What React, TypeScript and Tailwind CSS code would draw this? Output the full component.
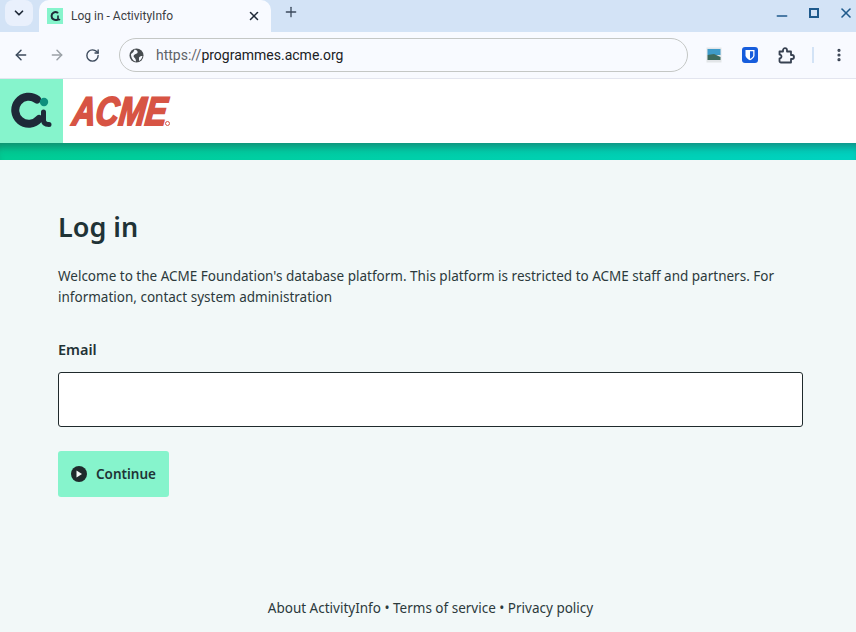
import { ArrowLeft, ArrowRight, RotateCw, X, Plus, ChevronDown, Minus, MoreVertical } from 'lucide-react';

function BrowserChrome() {
  return (
    <div className="flex flex-col font-['Roboto',sans-serif]">
      {/* Tab strip */}
      <div className="h-[32px] bg-[#d3e3f6] flex items-start">
        <div className="w-[28px] h-[26px] ml-[5px] bg-[#e9f0fc] rounded-[8px] flex items-center justify-center text-[#1f2937]">
          <ChevronDown size={14} strokeWidth={3} />
        </div>
        <div className="w-[232px] h-[32px] ml-[6px] bg-[#f8faff] rounded-t-[10px] flex items-center pl-[8px] pr-[10px]">
          <div className="w-[16px] h-[16px] bg-[#86f4cc] flex items-center justify-center">
            <svg width="12" height="12" viewBox="0 0 12 12" fill="none">
              <path d="M8.5 2.5A4 4 0 1 0 8.5 9.5" stroke="#1f2a37" strokeWidth="2" strokeLinecap="round" />
              <path d="M9 6v3.6h1.5" stroke="#1f2a37" strokeWidth="1.6" strokeLinecap="round" />
            </svg>
          </div>
          <span className="ml-[8px] text-[12px] text-[#3c4043] flex-1">Log in - ActivityInfo</span>
          <X size={14} strokeWidth={2.6} className="text-[#1f2937]" />
        </div>
        <Plus size={16} strokeWidth={2} className="ml-[12px] mt-[4px] text-[#3c4a5c]" />
        <div className="ml-auto flex items-center h-[26px] gap-[19px] pr-[2px] text-[#1f5a8c]">
          <Minus size={16} strokeWidth={2.4} className="mt-[6px]" />
          <div className="w-[10px] h-[10px] border-2 border-[#1f5a8c]" />
          <X size={16} strokeWidth={2.4} />
        </div>
      </div>
      {/* Toolbar */}
      <div className="h-[47px] bg-[#f8faff] flex items-center border-b border-[#e3e5ef] pl-[13px]">
        <ArrowLeft size={16} strokeWidth={2.2} className="text-[#3c4a5c]" />
        <ArrowRight size={16} strokeWidth={2.2} className="ml-[20px] text-[#9aa0a6]" />
        <RotateCw size={15} strokeWidth={2.2} className="ml-[20px] text-[#3c4a5c]" />
        <div className="ml-[19px] w-[569px] h-[34px] rounded-full border border-[#c4c7c5] flex items-center pl-[9px] text-[14px]">
          <svg width="15" height="15" viewBox="0 0 15 15" fill="none">
            <circle cx="7.5" cy="7.5" r="7" fill="#474c50" />
            <path d="M2 6 C4 5 5 3 5.5 1.5 C8 2 9 3 8.5 5 C7 6.5 5 6 4.5 8 C5 10 7 10 7 13.5 C4 13 2 10 2 6Z" fill="#f8faff" />
            <path d="M10 9.5 C11 8 12 8 13.5 8 C13 10.5 11.5 12.5 10 13 Z" fill="#f8faff" />
          </svg>
          <span className="ml-[12px] text-[#5f6368]">https://</span>
          <span className="text-[#202124]">programmes.acme.org</span>
        </div>
        <svg width="16" height="16" viewBox="0 0 16 16" className="ml-[18px]">
          <rect width="15" height="15" x="0.5" y="0.5" fill="#e2e5e8" />
          <rect width="13" height="6" x="1.5" y="2" fill="#3f9bc9" />
          <path d="M1.5 8 L8 7 L14.5 10 V13 H1.5 Z" fill="#3d6a5d" />
        </svg>
        <svg width="16" height="16" viewBox="0 0 16 16" className="ml-[20px]">
          <rect width="16" height="16" rx="3" fill="#175ddc" />
          <path d="M3.5 3h9v5.5c0 2.2-2.5 3.8-4.5 4.7-2-.9-4.5-2.5-4.5-4.7z" fill="#fff" />
          <path d="M8 4.3h3.2v4.2c0 1.4-1.6 2.5-3.2 3.3z" fill="#175ddc" />
        </svg>
        <svg width="17" height="17" viewBox="0 0 17 17" fill="none" className="ml-[20px]">
          <path d="M1.5 4.5H5V3.2a2 2 0 0 1 4 0V4.5h4V8h1a2 2 0 0 1 0 4h-1v3.5H3a1.5 1.5 0 0 1-1.5-1.5V11.5a2 2 0 0 0 0-4z" stroke="#374151" strokeWidth="1.8" strokeLinejoin="round" />
        </svg>
        <div className="ml-[17px] w-[2px] h-[16px] bg-[#d3e3f6]" />
        <MoreVertical size={16} strokeWidth={2.8} className="ml-[17px] text-[#374151]" />
      </div>
    </div>
  );
}

function SiteHeader() {
  return (
    <div>
      <div className="h-[64px] bg-white flex items-stretch">
        <div className="w-[63px] bg-[#86f4cc] flex items-center justify-center">
          <svg width="42" height="38" viewBox="0 0 42 38" fill="none">
            <path d="M26 7.5 A13.5 13.5 0 1 0 28 27" stroke="#1e2938" strokeWidth="8" strokeLinecap="round" />
            <path d="M32.5 20 V28 Q32.5 32.5 38 32.5" stroke="#1e2938" strokeWidth="5" strokeLinecap="round" />
            <circle cx="33" cy="10" r="4.2" fill="#0f8f7e" />
          </svg>
        </div>
        <div className="ml-[10px] flex items-start pt-[9px]">
          <span className="w-[92px] whitespace-nowrap text-[40px] leading-[46px] font-['Liberation_Sans',sans-serif] font-bold italic text-[#d75444] [-webkit-text-stroke:2px_#d75444] [transform:scaleX(0.8)_skewX(-8deg)] origin-left">ACME</span>
          <span className="mt-[33px] border border-[#d75444] rounded-full w-[5px] h-[5px]" />
        </div>
      </div>
      <div className="h-[17px] bg-gradient-to-r from-[#00cc94] to-[#00d2c0] shadow-[inset_0_9px_8px_-5px_rgba(40,60,60,0.45)]" />
    </div>
  );
}

export default function App() {
  return (
    <div className="h-[632px] w-[856px] overflow-hidden flex flex-col bg-[#f2f8f8] font-['Noto_Sans',sans-serif] text-[#2c3a3c]">
      <BrowserChrome />
      <SiteHeader />
      <div className="flex-1 flex flex-col px-[58px]">
        <h1 className="mt-[48px] text-[27px] leading-[38px] font-semibold text-[#1f3336]">Log in</h1>
        <p className="mt-[20px] text-[13.5px] leading-[21px] w-[740px]">
          Welcome to the ACME Foundation's database platform. This platform is restricted to ACME staff and partners. For information, contact system administration
        </p>
        <label className="mt-[31px] text-[14.5px] leading-[20px] font-semibold text-[#1f3336]">Email</label>
        <input className="mt-[13px] h-[55px] w-[745px] bg-white border border-[#1f2a2c] rounded-[3px]" />
        <button className="mt-[24px] w-[111px] h-[46px] bg-[#86f4cc] rounded-[3px] flex items-center pl-[13px] gap-[9px] text-[13.5px] font-semibold text-[#1f3336]">
          <span className="w-[16px] h-[16px] rounded-full bg-[#1f2a2c] flex items-center justify-center">
            <svg width="8" height="8" viewBox="0 0 8 8"><path d="M1.5 0.5 L7 4 L1.5 7.5 Z" fill="#f2f7f6" /></svg>
          </span>
          Continue
        </button>
        <div className="mt-[101px] pl-[5px] text-center text-[13.5px] leading-[20px]">
          About ActivityInfo • Terms of service • Privacy policy
        </div>
      </div>
    </div>
  );
}
